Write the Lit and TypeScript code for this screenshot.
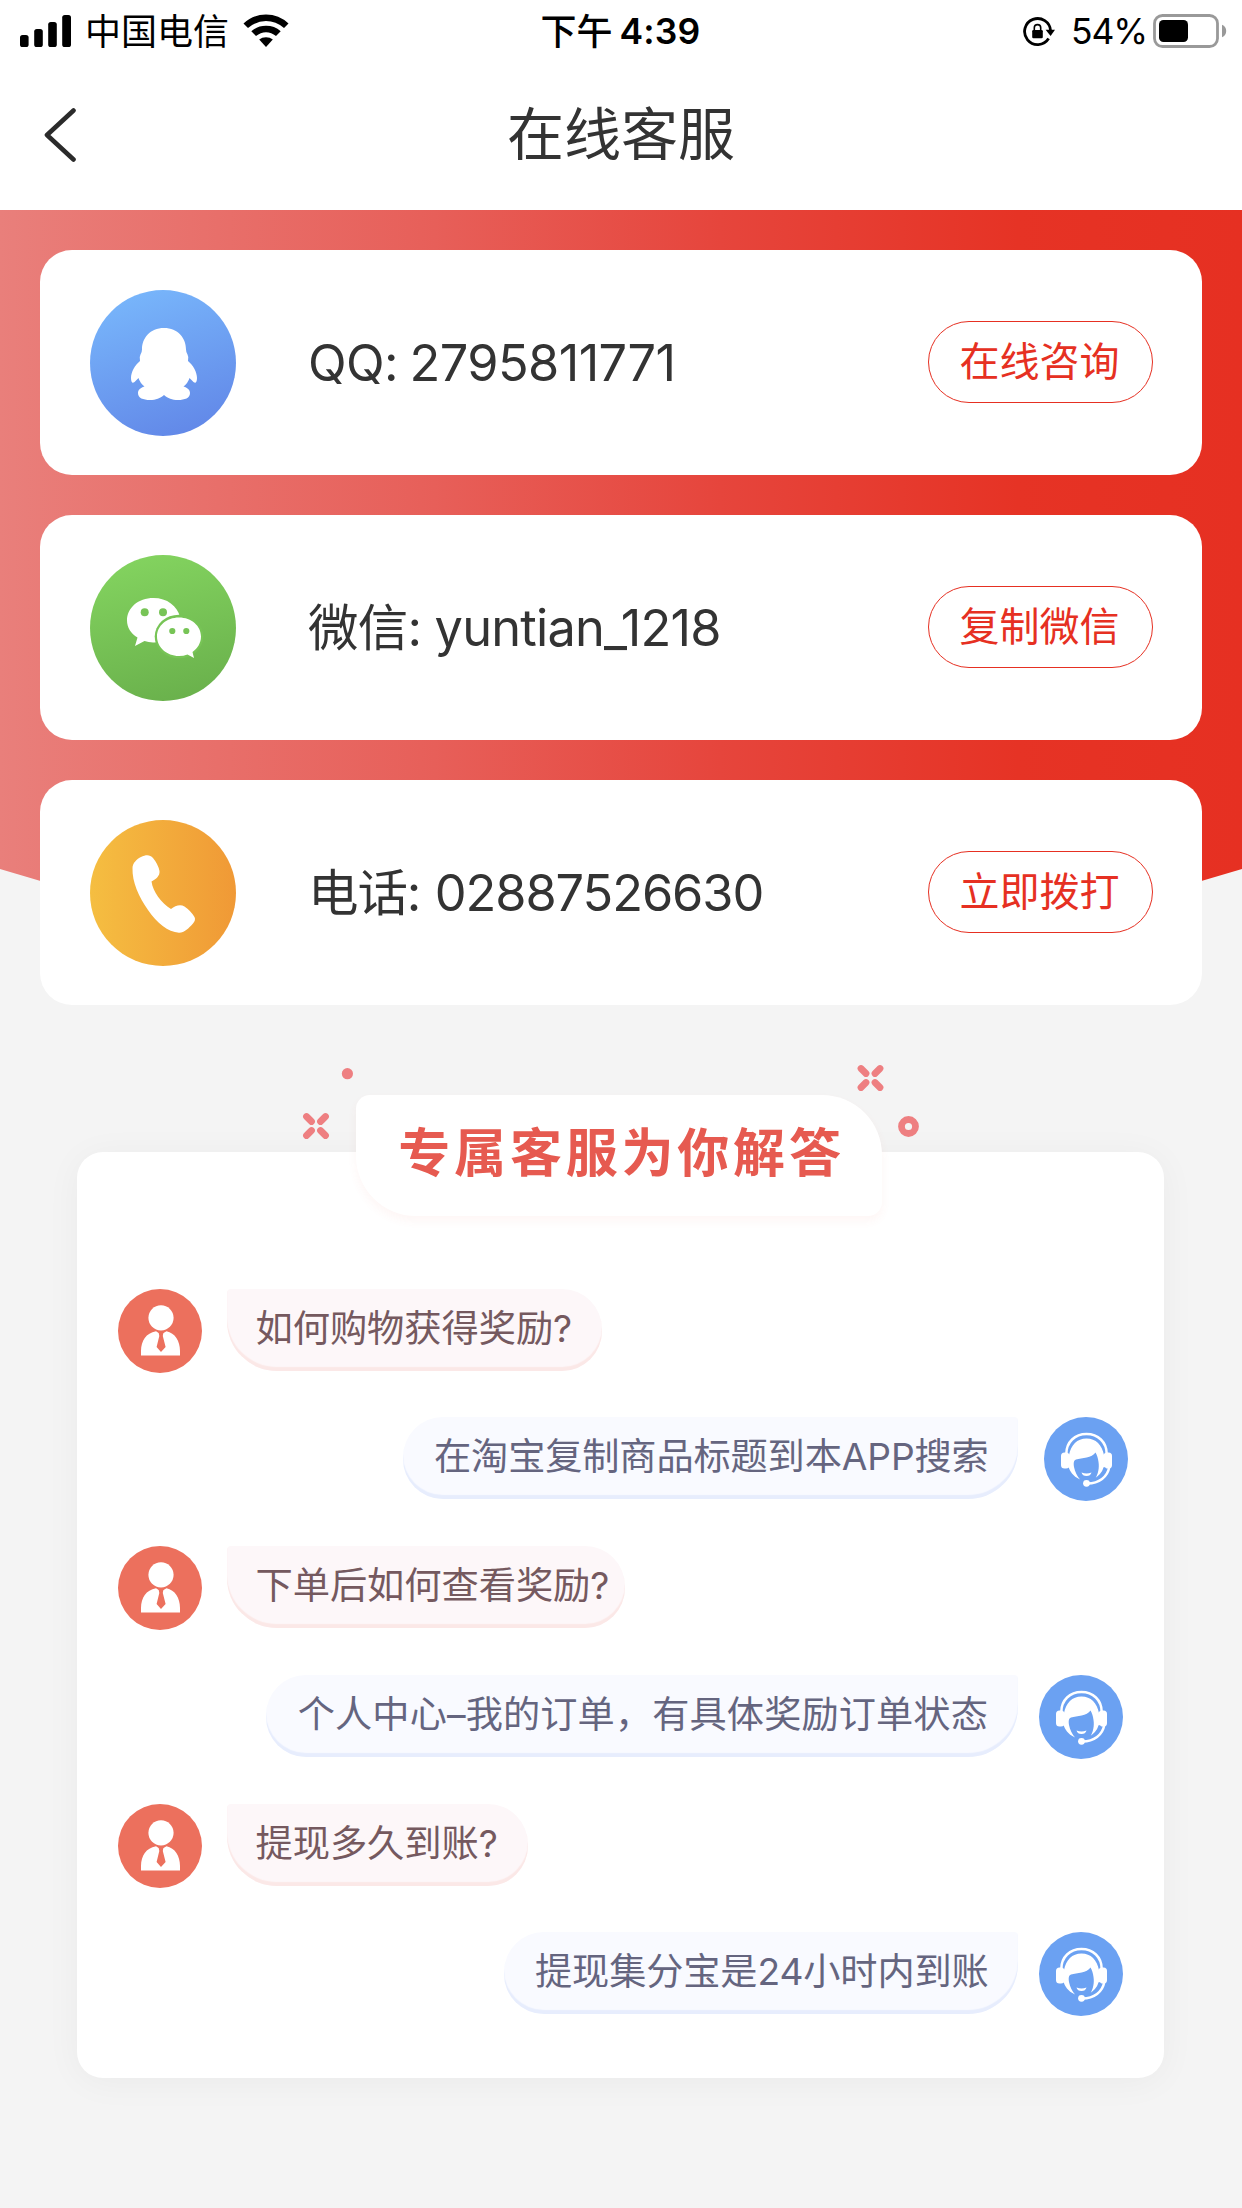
import { LitElement, html, svg, css } from "lit";
import { customElement, property } from "lit/decorators.js";
import { styleMap } from "lit/directives/style-map.js";

interface Contact {
  kind: "qq" | "wechat" | "phone";
  text: string;
  action: string;
}

interface Message {
  from: "user" | "agent";
  text: string;
  width: number;
}

const CONTACTS: Contact[] = [
  { kind: "qq", text: "QQ: 2795811771", action: "在线咨询" },
  { kind: "wechat", text: "微信: yuntian_1218", action: "复制微信" },
  { kind: "phone", text: "电话: 02887526630", action: "立即拨打" },
];

const MESSAGES: Message[] = [
  { from: "user", text: "如何购物获得奖励?", width: 375 },
  { from: "agent", text: "在淘宝复制商品标题到本APP搜索", width: 615 },
  { from: "user", text: "下单后如何查看奖励?", width: 398 },
  { from: "agent", text: "个人中心–我的订单，有具体奖励订单状态", width: 752 },
  { from: "user", text: "提现多久到账?", width: 301 },
  { from: "agent", text: "提现集分宝是24小时内到账", width: 514 },
];

const FONT = css`"Inter", "Noto Sans CJK SC", sans-serif`;

@customElement("status-bar")
class StatusBar extends LitElement {
  static styles = css`
    :host {
      display: grid;
      grid-template-columns: 1fr auto 1fr;
      align-items: center;
      height: 60px;
      padding: 0 15px 0 20px;
      font-family: ${FONT};
      font-size: 36px;
      line-height: 60px;
      color: #000;
    }
    .left { display: flex; align-items: center; }
    .right { display: flex; align-items: center; justify-content: flex-end; }
    .carrier { margin: 2px 14px 0 14px; }
    .time { display: flex; gap: 7px; font-weight: 500; padding: 2px 6px 0 0; }
    .clock { font-weight: 600; font-size: 35.5px; letter-spacing: 0.2px; }
    .percent { margin: 2px 6px 0 16px; font-size: 35.5px; letter-spacing: -1.1px; }
    svg { display: block; flex: none; }
  `;
  render() {
    return html`
      <div class="left">
        <svg width="51" height="34" viewBox="0 0 51 34">
          <rect x="0" y="21" width="8.6" height="12" rx="2.6" />
          <rect x="14.2" y="15" width="8.6" height="18" rx="2.6" />
          <rect x="28.2" y="8" width="8.6" height="25" rx="2.6" />
          <rect x="42.2" y="1" width="8.8" height="32" rx="2.6" />
        </svg>
        <span class="carrier">中国电信</span>
        <svg width="46" height="34" viewBox="0 0 46 34">
          <path d="M0.5 9.5Q10 .5 23 .5T45.5 9.5L41 14Q33 7 23 7T5 14Z" />
          <path d="M8.3 17.2Q14.5 11.8 23 11.8T37.7 17.2L33 22Q28.5 18.2 23 18.2T13 22Z" />
          <path d="M16.2 25.5Q19 23.2 23 23.2T29.8 25.5L23 33Z" />
        </svg>
      </div>
      <div class="time"><span>下午</span><span class="clock">4:39</span></div>
      <div class="right">
        <svg width="32" height="30" viewBox="0 0 32 30">
          <path d="M25.6 22.5A13 13 0 1 1 27.6 15" fill="none" stroke="#000" stroke-width="2.8" />
          <path d="M22.6 13.8H32L27.6 20Z" />
          <rect x="9.2" y="14" width="10.6" height="8.2" rx="1.2" />
          <path d="M11.3 14.5V11.8A3.2 3.2 0 0 1 17.7 11.8V14.5" fill="none" stroke="#000" stroke-width="1.6" />
        </svg>
        <span class="percent">54%</span>
        <svg width="74" height="34" viewBox="0 0 74 34">
          <rect x="1.5" y="1.5" width="63" height="31" rx="8" fill="none" stroke="#999" stroke-width="2.8" />
          <rect x="6" y="6" width="29" height="22" rx="4.5" />
          <path d="M69 10.7Q73.2 12.5 73.2 17T69 23.3Z" fill="#999" />
        </svg>
      </div>
    `;
  }
}

@customElement("contact-card")
class ContactCard extends LitElement {
  @property({ attribute: false }) contact!: Contact;
  static styles = css`
    :host {
      display: flex;
      align-items: center;
      box-sizing: border-box;
      height: 225px;
      padding: 0 49px 0 50px;
      border-radius: 32px;
      background: #fff;
      font-family: ${FONT};
    }
    svg { display: block; flex: none; width: 146px; height: 146px; }
    .label {
      flex: 1;
      padding-left: 72px;
      font-size: 50.5px;
      line-height: 70px;
      color: #333;
      white-space: nowrap;
    }
    .qq { letter-spacing: -0.6px; word-spacing: -2px; }
    .wechat { letter-spacing: -0.8px; }
    .phone { letter-spacing: -1.1px; word-spacing: 1.5px; }
    .action {
      box-sizing: border-box;
      width: 225px;
      height: 82px;
      margin-bottom: 2px;
      border: 1px solid #e63022;
      border-radius: 41px;
      background: none;
      padding: 1px 2px 0 0;
      font: 400 40px/78px ${FONT};
      text-align: center;
      color: #e63022;
    }
  `;
  private icon() {
    if (this.contact.kind === "qq") {
      return svg`
        <defs><linearGradient id="g" x1=".3" y1="0" x2=".65" y2="1">
          <stop offset="0" stop-color="#78b6fb" /><stop offset="1" stop-color="#6288e8" />
        </linearGradient></defs>
        <circle cx="73" cy="73" r="73" fill="url(#g)" />
        <path fill="#fff" d="M74 38C60 38 52 48 52 59.500Q52 62 50.500 64.500Q49 67 50 71C45 75 41 82 41 88C41 93 43 94 45.500 91L48.500 88Q50 93 54.500 96.500C50 98 48 100 48 103C48 108 53 110 60 110C66 110 70 108.500 74 105C78 108.500 82 110 88 110C95 110 100 108 100 103C100 100 98 98 93.500 96.500Q98 93 99.500 88L102.500 91C105 94 107 93 107 88C107 82 103 75 98 71Q99 67 97.500 64.500Q96 62 96 59.500C96 48 88 38 74 38Z" />`;
    }
    if (this.contact.kind === "wechat") {
      return svg`
        <defs><linearGradient id="g" x1=".35" y1="0" x2=".6" y2="1">
          <stop offset="0" stop-color="#83d35f" /><stop offset="1" stop-color="#6ab14c" />
        </linearGradient></defs>
        <circle cx="73" cy="73" r="73" fill="url(#g)" />
        <path fill="#fff" d="M63.500 43C48 43 37 53 37 65.500C37 72.500 41 78.500 47.500 82.500L45 91L54.500 86Q60 88 66 87.300L90 62C87.500 51 77 43 63.500 43Z" />
        <ellipse cx="89" cy="81.500" rx="24.300" ry="21.800" fill="#77c456" />
        <path fill="#fff" d="M89 62.500C76.500 62.500 67 71 67 81.500S76.500 101 89 101Q93.500 101 97.500 99.500L104 103L102.500 97C107.500 93.500 111 88 111 81.500C111 71 101.500 62.500 89 62.500Z" />
        <g fill="#77c456"><circle cx="54.700" cy="57.200" r="4" /><circle cx="73" cy="57.200" r="4" />
        <circle cx="82.300" cy="76" r="3.100" /><circle cx="96.300" cy="76" r="3.100" /></g>`;
    }
    return svg`
      <defs><linearGradient id="g"><stop offset="0" stop-color="#f5be41" /><stop offset="1" stop-color="#f09936" /></linearGradient></defs>
      <circle cx="73" cy="73" r="73" fill="url(#g)" />
      <path fill="#fff" d="M42.500 48C42.500 43 47 39 51 37C56 34.500 60 34.500 63 38Q68 44 69.500 51C70 56 66 59 61.500 61.500C63 72 71 82.500 81 89C85 86 90 84 94.500 86.500Q101 91 104.500 97Q106 100 103 103.500C99 108 94 113 89 112.800C78 112 67 103 58 90C49 77 42 62 42.500 48Z" />`;
  }
  render() {
    return html`
      <svg viewBox="0 0 146 146">${this.icon()}</svg>
      <span class="label ${this.contact.kind}">${this.contact.text}</span>
      <button class="action">${this.contact.action}</button>
    `;
  }
}

@customElement("chat-row")
class ChatRow extends LitElement {
  @property({ attribute: false }) message!: Message;
  @property({ type: Boolean }) wide = false;
  static styles = css`
    :host { display: block; font-family: ${FONT}; }
    .row { display: flex; align-items: flex-start; height: 84px; }
    .row.agent { flex-direction: row-reverse; }
    svg { display: block; flex: none; width: 84px; height: 84px; }
    .bubble {
      box-sizing: border-box;
      height: 82px;
      margin-left: 25px;
      padding: 0 29px;
      font-size: 37.3px;
      line-height: 80px;
      letter-spacing: -0.1px;
      white-space: nowrap;
      color: #75595f;
      background: #fdf7f9;
      border-radius: 4px 40px 40px 50px;
      box-shadow: inset 0 -4px 1px #fbe8e7;
    }
    .agent .bubble {
      margin: 0 21px 0 0;
      padding: 0 31px;
      font-size: 37.2px;
      letter-spacing: -0.12px;
      text-align: right;
      color: #65657f;
      background: #f9faff;
      border-radius: 40px 4px 50px 40px;
      box-shadow: inset 0 -4px 1px #e7edfd;
    }
    .agent .bubble.long { letter-spacing: 0.12px; padding-right: 30px; }
    :host([wide]) .agent .bubble { margin-right: 26px; }
  `;
  private avatar() {
    return this.message.from === "user"
      ? svg`
        <circle cx="42" cy="42" r="42" fill="#ec705d" />
        <circle cx="43" cy="28.800" r="12.600" fill="#fff" />
        <path fill="#fff" d="M38 42.300L43 45.500L48.500 42.300C57 44 62 52 62 62V66.500H23V62C23 52 28 44 38 42.300Z" />
        <path fill="#ec705d" d="M40.500 43L43 44.600L45.500 43L44.800 47L47.600 58L43 63L38.600 58L41.300 47Z" />`
      : svg`
        <circle cx="42" cy="42" r="42" fill="#6ba1f2" />
        <path d="M22.300 37C22.300 25 31 17 42.500 17S62.700 25 62.700 37" fill="none" stroke="#fff" stroke-width="2.500" />
        <path fill="#fff" d="M25 38C27 28 33 21.500 42.500 21.500S58 28 60 38V51C58 57 55 60 51.500 61.500C54 57 55.500 51 54.500 45C54 41 53 38 51.500 35.500C48 41 38 41 32 42.500C29.500 43.500 29.500 46 30 50C31 55 33 59 36 62.500C28.500 59 26 54 24.500 50Z" />
        <rect x="17" y="35.500" width="8.500" height="16" rx="3.500" fill="#fff" />
        <rect x="59.500" y="35.500" width="8.500" height="16" rx="3.500" fill="#fff" />
        <path d="M61 50.500C59 57 55 61 49.500 63.500" fill="none" stroke="#6ba1f2" stroke-width="2.600" />
        <path d="M65.300 50C63.500 60 55 66.500 43.500 66.500" fill="none" stroke="#fff" stroke-width="2.500" />
        <circle cx="42.500" cy="66.300" r="3.400" fill="#fff" />
        <path fill="#fff" d="M37.500 55.500Q42.500 57.500 47.500 55.500Q46.500 59 42.500 59T37.500 55.500Z" />`;
  }
  render() {
    const m = this.message;
    return html`<div class="row ${m.from}">
      <svg viewBox="0 0 84 84">${this.avatar()}</svg>
      <div class="bubble ${m.width > 700 ? "long" : ""}" style=${styleMap({ width: `${m.width}px` })}>${m.text}</div>
    </div>`;
  }
}

@customElement("app-root")
class AppRoot extends LitElement {
  static styles = css`
    :host {
      display: block;
      width: 1242px;
      height: 2208px;
      overflow: hidden;
      background: #f4f4f4;
      font-family: ${FONT};
    }
    .top { height: 210px; background: #fff; }
    .nav {
      display: grid;
      grid-template-columns: 1fr auto 1fr;
      align-items: center;
      height: 150px;
      padding: 0 44px;
    }
    .nav svg { display: block; }
    .title { margin: 0; font-weight: 400; font-size: 57px; line-height: 80px; color: #333; }
    .contacts {
      position: relative;
      display: flex;
      flex-direction: column;
      gap: 40px;
      padding: 40px 40px 0;
    }
    .hero {
      position: absolute;
      inset: 0 0 auto 0;
      height: 760px;
      background: linear-gradient(90deg, #e97f7b 0%, #e75f59 35%, #e6453c 58%, #e63325 82%, #e63022 100%);
      clip-path: polygon(0 0, 100% 0, 100% 659px, 1002px 730px, 240px 730px, 0 659px);
    }
    contact-card { position: relative; }
    .faq {
      position: relative;
      box-sizing: border-box;
      width: 1087px;
      height: 926px;
      margin: 147px 0 0 77px;
      padding: 136.5px 41px 0 40.5px;
      border-radius: 26px;
      background: #fff;
      box-shadow: 0 4px 36px rgba(0, 0, 0, 0.045);
    }
    .chat { display: flex; flex-direction: column; gap: 44.8px; }
    .chat .shifted { margin-right: -5px; }
    .banner {
      position: absolute;
      left: 279px;
      top: -57px;
      width: 526px;
      height: 121px;
      border-radius: 14px 60px 14px 60px;
      background: #fff;
      box-shadow: 0 5px 10px rgba(230, 90, 80, 0.055);
      text-align: center;
    }
    .heading {
      margin: 0;
      font-weight: 700;
      font-size: 52px;
      line-height: 118px;
      letter-spacing: 3.8px;
      text-indent: 5px;
      color: #e65a50;
      white-space: nowrap;
    }
    .confetti {
      position: absolute;
      left: 223px;
      top: -92px;
      display: block;
    }
  `;
  render() {
    return html`
      <div class="top">
        <status-bar></status-bar>
        <div class="nav">
          <svg width="32" height="54" viewBox="0 0 32 54">
            <path d="M29.500 2.500L3 27L29.500 51.500" fill="none" stroke="#2b2b2b" stroke-width="4.600" stroke-linecap="round" stroke-linejoin="round" />
          </svg>
          <h1 class="title">在线客服</h1>
        </div>
      </div>
      <div class="contacts">
        <div class="hero"></div>
        ${CONTACTS.map((c) => html`<contact-card .contact=${c}></contact-card>`)}
      </div>
      <div class="faq">
        <svg class="confetti" width="640" height="80" viewBox="0 0 640 80">
          <g fill="none" stroke="#ee7f81" stroke-width="6.800" stroke-linecap="round">
            <path d="M6.500 56.500L11.500 61.500M25.500 56.500L20.500 61.500M6.500 75.500L11.500 70.500M25.500 75.500L20.500 70.500" />
            <path d="M561 8.500L566 13.500M580 8.500L575 13.500M561 27.500L566 22.500M580 27.500L575 22.500" />
            <circle cx="608.500" cy="66.500" r="7" />
          </g>
          <circle cx="47.400" cy="13.700" r="5.600" fill="#ee7f81" />
        </svg>
        <div class="banner"><h2 class="heading">专属客服为你解答</h2></div>
        <div class="chat">
          ${MESSAGES.map(
            (m, i) => html`<chat-row class=${i === 1 ? "shifted" : m.from} ?wide=${i === 1} .message=${m}></chat-row>`
          )}
        </div>
      </div>
    `;
  }
}
